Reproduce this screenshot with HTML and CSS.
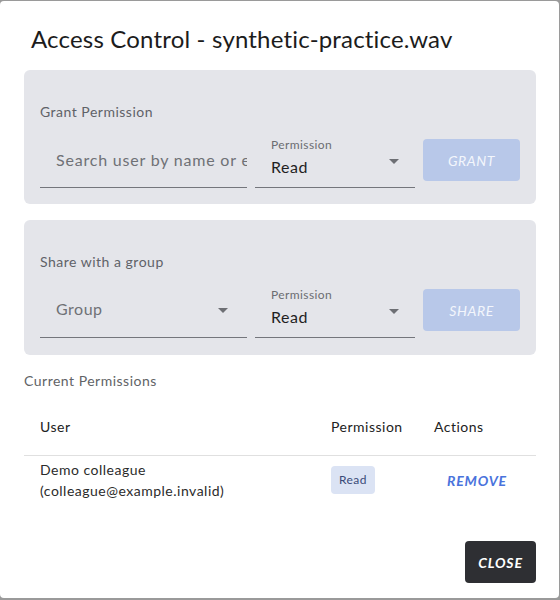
FILE: index.html
```html
<!DOCTYPE html>
<html lang="en">
<head>
<meta charset="utf-8">
<title>Access Control</title>
<link rel="stylesheet" href="styles.css">
</head>
<body>
<div class="dialog" role="dialog">
  <h2 class="title">Access Control - synthetic-practice.wav</h2>
  <div class="content">
    <section class="panel">
      <div class="panel-label">Grant Permission</div>
      <div class="row">
        <div class="field field-plain">
          <input class="search" type="text" placeholder="Search user by name or email" aria-label="Search user">
        </div>
        <div class="field field-labeled">
          <div class="flabel">Permission</div>
          <div class="value">
            <span>Read</span>
            <svg class="arrow" viewBox="0 0 10 5" width="10" height="5"><path d="M0 0h10L5 5z" fill="#6d6f74"/></svg>
          </div>
        </div>
        <button class="btn btn-disabled" type="button">Grant</button>
      </div>
    </section>
    <section class="panel panel-2">
      <div class="panel-label">Share with a group</div>
      <div class="row">
        <div class="field field-plain field-select">
          <div class="value placeholder">
            <span>Group</span>
            <svg class="arrow arrow-low" viewBox="0 0 10 5" width="10" height="5"><path d="M0 0h10L5 5z" fill="#6d6f74"/></svg>
          </div>
        </div>
        <div class="field field-labeled">
          <div class="flabel">Permission</div>
          <div class="value">
            <span>Read</span>
            <svg class="arrow" viewBox="0 0 10 5" width="10" height="5"><path d="M0 0h10L5 5z" fill="#6d6f74"/></svg>
          </div>
        </div>
        <button class="btn btn-disabled" type="button">Share</button>
      </div>
    </section>
    <div class="section-label">Current Permissions</div>
    <table class="perm-table">
      <colgroup>
        <col class="c-user"><col class="c-perm"><col class="c-act">
      </colgroup>
      <thead>
        <tr><th>User</th><th>Permission</th><th>Actions</th></tr>
      </thead>
      <tbody>
        <tr>
          <td>Demo colleague<br>(colleague@example.invalid)</td>
          <td><span class="chip">Read</span></td>
          <td><button class="remove" type="button">Remove</button></td>
        </tr>
      </tbody>
    </table>
  </div>
  <div class="actions">
    <button class="close" type="button">Close</button>
  </div>
</div>
</body>
</html>
```
FILE: styles.css
```css
* { box-sizing: border-box; }
html, body { margin: 0; height: 100%; }
body {
  background: #9a9a9a;
  font-family: Lato, "Noto Sans", sans-serif;
  overflow: hidden;
}
.dialog {
  width: 559px;
  height: 597px;
  margin-top: 1px;
  background: #fff;
  border-radius: 4px;
  display: flex;
  flex-direction: column;
}
.title {
  margin: 0;
  padding: 22px 24px 15px 31px;
  font-size: 24px;
  line-height: 32px;
  font-weight: 400;
  letter-spacing: 0.18px;
  color: #1c1c1c;
  white-space: nowrap;
}
.content { padding: 0 23px 0 24px; }
.panel {
  background: #e4e5ea;
  border-radius: 6px;
  padding: 16px;
  margin-bottom: 16px;
}
.panel-2 { padding-bottom: 17px; }
.panel-label {
  margin: 16px 0 18px;
  font-size: 14px;
  line-height: 20px;
  letter-spacing: 0.5px;
  color: #5f6268;
}
.row {
  display: grid;
  grid-template-columns: 1fr 160px 97px;
  gap: 8px;
  align-items: start;
}
.field {
  height: 48px;
  border-bottom: 1px solid #74767c;
  display: flex;
  flex-direction: column;
  padding-left: 16px;
}
.field-plain { padding-top: 8px; overflow: hidden; }
.field-select { padding-top: 7px; }
.flabel {
  margin-top: -2px;
  font-size: 12px;
  line-height: 14px;
  letter-spacing: 0.4px;
  color: #6b6d72;
  margin-bottom: 3px;
}
.value {
  display: flex;
  justify-content: space-between;
  align-items: flex-start;
  font-size: 16px;
  line-height: 23px;
  letter-spacing: 0.5px;
  color: #1f1f1f;
  white-space: nowrap;
}
.placeholder { color: #6f7176; }
.search {
  display: block;
  width: 100%;
  height: 23px;
  margin: 0;
  padding: 0;
  border: 0;
  outline: none;
  background: transparent;
  font-family: Lato, "Noto Sans", sans-serif;
  font-size: 16px;
  line-height: 23px;
  letter-spacing: 0.8px;
  color: #1f1f1f;
}
.search::placeholder { color: #6f7176; opacity: 1; }
.arrow { flex: none; margin: 4px 16px 0 0; }
.arrow-low { margin-top: 11px; margin-right: 19px; }
.btn {
  height: 42px;
  margin-top: -1px;
  border: 0;
  border-radius: 4px;
  font-family: Lato, "Noto Sans", sans-serif;
  font-style: italic;
  font-size: 14px;
  letter-spacing: 0.6px;
  text-transform: uppercase;
}
.btn-disabled { background: #b8c8e9; color: #f3f6fc; }
.section-label {
  font-size: 14px;
  line-height: 20px;
  letter-spacing: 0.5px;
  color: #616366;
}
.perm-table {
  margin-top: 9px;
  width: 512px;
  border-collapse: collapse;
  table-layout: fixed;
  font-size: 14px;
  letter-spacing: 0.5px;
}
.c-user { width: 291px; }
.c-perm { width: 103px; }
.c-act { width: 118px; }
.perm-table th {
  text-align: left;
  font-weight: 400;
  color: #222;
  padding: 15px 16px 16px;
  line-height: 24px;
  border-bottom: 1px solid #e0e0e0;
}
.perm-table td {
  padding: 3px 16px 5px;
  line-height: 21px;
  color: #2b2b2b;
  vertical-align: middle;
}
.chip {
  display: inline-block;
  height: 28px;
  line-height: 28px;
  padding: 0 8px;
  border-radius: 4px;
  background: #dbe3f4;
  color: #3a4a78;
  font-size: 12px;
  letter-spacing: 0.4px;
}
.remove {
  display: block;
  width: 100%;
  padding: 6px 0;
  border: 0;
  background: none;
  font-family: Lato, "Noto Sans", sans-serif;
  font-weight: 700;
  font-style: italic;
  font-size: 14px;
  letter-spacing: 0.8px;
  text-transform: uppercase;
  color: #4a73dc;
}
.actions {
  margin-top: auto;
  display: flex;
  justify-content: flex-end;
  padding: 0 23px 15px 0;
}
.close {
  width: 71px;
  height: 42px;
  border: 0;
  border-radius: 4px;
  background: #2e2f33;
  color: #fff;
  font-family: Lato, "Noto Sans", sans-serif;
  font-weight: 700;
  font-style: italic;
  font-size: 14px;
  letter-spacing: 0.9px;
  text-transform: uppercase;
}
```
